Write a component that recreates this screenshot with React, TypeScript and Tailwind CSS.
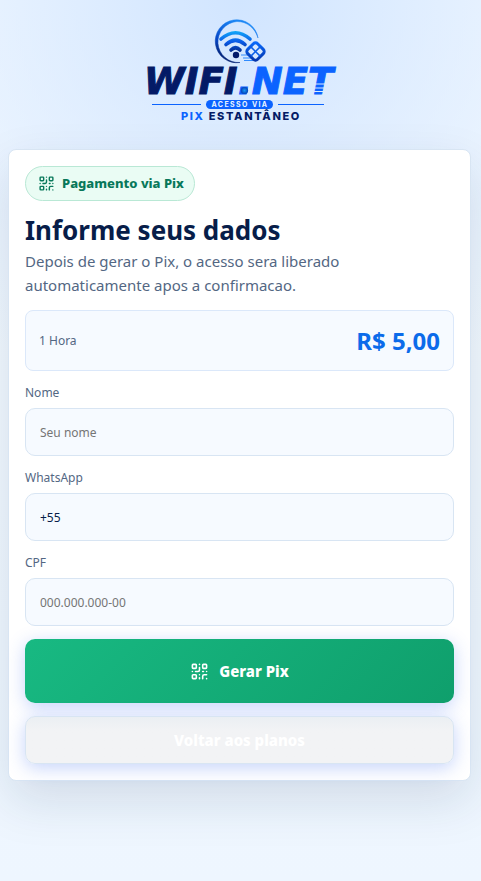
import { useState } from 'react';
import { QrCode } from 'lucide-react';

interface Field {
    id: string;
    label: string;
    placeholder: string;
    initial: string;
    inputMode: 'text' | 'tel' | 'numeric';
}

const fields: Field[] = [
    { id: 'nome', label: 'Nome', placeholder: 'Seu nome', initial: '', inputMode: 'text' },
    { id: 'whatsapp', label: 'WhatsApp', placeholder: '+55', initial: '+55', inputMode: 'tel' },
    { id: 'cpf', label: 'CPF', placeholder: '000.000.000-00', initial: '', inputMode: 'numeric' }
];

const Logo = () => (
    <svg viewBox="0 0 200 120" className="h-[120px] w-[200px]" role="img" aria-label="WIFI.NET">
        <defs>
            <linearGradient id="ring" x1="0" y1="1" x2="0.4" y2="0">
                <stop offset="0" stopColor="#02104f" />
                <stop offset="0.5" stopColor="#0648c8" />
                <stop offset="1" stopColor="#1a86f5" />
            </linearGradient>
            <linearGradient id="wave" gradientUnits="userSpaceOnUse" x1="0" y1="20" x2="0" y2="46">
                <stop offset="0" stopColor="#12b0fa" />
                <stop offset="0.45" stopColor="#0a5be8" />
                <stop offset="1" stopColor="#021a6b" />
            </linearGradient>
            <linearGradient id="chip" x1="0" y1="0" x2="1" y2="1">
                <stop offset="0" stopColor="#0a6cff" />
                <stop offset="1" stopColor="#0433a8" />
            </linearGradient>
            <radialGradient id="dot">
                <stop offset="0" stopColor="#1697f7" />
                <stop offset="1" stopColor="#0440b5" />
            </radialGradient>
        </defs>
        {/* ring that thins out towards the right */}
        <path d="M100 52.500 A21.500 21.500 0 1 1 118 28 C115 18 107 11.500 97 11.500 A20 20 0 0 0 100 52.500Z" fill="url(#ring)" stroke="url(#ring)" strokeWidth="0.500" />
        <g fill="none" stroke="url(#wave)" strokeLinecap="round" strokeWidth="3.600">
            <path d="M81 29 Q95.500 16.500 110 29" />
            <path d="M86 34.500 Q95.500 26 105 34.500" />
            <path d="M91 40 Q95.500 35.500 100 40" />
        </g>
        <circle cx="96" cy="45" r="3.200" fill="#021a6b" />
        <path d="M101 45h9M103 48h8M104 50.500h9" stroke="#2f8bff" strokeWidth="1" />
        <g transform="rotate(45 115.500 41.500)">
            <rect x="108.500" y="34.500" width="14" height="14" rx="3" fill="#d9eaff" stroke="url(#chip)" strokeWidth="3" />
            <path d="M115.500 35v13M109 41.500h13" stroke="#0b5fe8" strokeWidth="1.500" />
        </g>
        <text x="4" y="84" fontSize="37" strokeWidth="1" className="font-['DejaVu_Sans',sans-serif] font-bold italic" fill="#031a66" stroke="#031a66">
            WIFI<tspan fill="#0b63ff" stroke="#0b63ff">.NET</tspan>
        </text>
        <circle cx="104.500" cy="80.500" r="3.600" fill="url(#dot)" />
        <path d="M173 74h14M172 78h14M171 81.500h14" stroke="#dcebff" strokeWidth="1" />
        <path d="M12 94.500h49M138 94.500h46" stroke="#0b63ff" strokeWidth="1" />
        <rect x="66" y="90" width="67" height="9" rx="4.500" fill="#0b63ff" />
        <text x="100" y="97" fontSize="7" textAnchor="middle" className="font-[Inter,sans-serif] font-bold tracking-[0.2em]" fill="#eaf4ff">ACESSO VIA</text>
        <text x="101" y="110" fontSize="11" textAnchor="middle" className="font-[Inter,sans-serif] font-extrabold tracking-[0.15em]" fill="#031a66">
            <tspan fill="#0b63ff">PIX</tspan> ESTANTÂNEO
        </text>
    </svg>
);

const App = () => {
    const [values, setValues] = useState<Record<string, string>>(
        Object.fromEntries(fields.map((field) => [field.id, field.initial]))
    );

    return (
        <div className="min-h-screen bg-[radial-gradient(circle_at_top,#d1e5ff_0%,transparent_46%),linear-gradient(180deg,#f5faff,#eef6ff)] pt-[10px] pr-[10px] pb-8 pl-2 font-['Noto_Sans',sans-serif] text-[#071d49]">
            <header className="flex justify-center pb-[19px]">
                <Logo />
            </header>

            <main className="rounded-lg border border-[#d8e5f3] bg-white p-4 shadow-[0_20px_50px_rgba(15,45,75,0.13)]">
                <form className="flex flex-col gap-[13px]" onSubmit={(event) => event.preventDefault()}>
                    <div>
                        <span className="inline-flex h-[35px] items-center gap-[7px] rounded-full border border-[#b9e8d5] bg-[#eafcf4] pr-[10px] pl-3 text-[13px] font-extrabold text-[#08785a]">
                            <QrCode className="size-[17px]" />
                            Pagamento via Pix
                        </span>
                        <h1 className="mt-[10px] text-[26px] leading-[38px] font-bold">Informe seus dados</h1>
                        <p className="text-[15px] leading-6 text-[#536783]">
                            Depois de gerar o Pix, o acesso sera liberado automaticamente apos a confirmacao.
                        </p>
                    </div>

                    <div className="flex h-[61px] items-center justify-between rounded-lg border border-[#dbe8fa] bg-[#f6faff] px-[13px]">
                        <span className="text-xs text-[#536783]">1 Hora</span>
                        <strong className="text-2xl font-bold text-[#0b6bea]">R$ 5,00</strong>
                    </div>

                    {fields.map((field) => (
                        <div key={field.id} className="flex flex-col gap-[7px]">
                            <label htmlFor={field.id} className="text-xs leading-[17px] text-[#536783]">{field.label}</label>
                            <input
                                id={field.id}
                                type="text"
                                inputMode={field.inputMode}
                                placeholder={field.placeholder}
                                value={values[field.id]}
                                onChange={(event) => setValues({ ...values, [field.id]: event.target.value })}
                                className="h-12 w-full rounded-[10px] border border-[#d8e5f3] bg-[#f6faff] px-[14px] text-xs text-[#071d49] placeholder:text-[#757575]"
                            />
                        </div>
                    ))}

                    <button type="submit" className="flex h-16 items-center justify-center gap-[10px] rounded-[10px] bg-linear-135 from-[#18b982] to-[#0f9f6c] text-[15px] font-extrabold text-white shadow-[0_4px_18px_rgba(50,100,240,0.28)]">
                        <QrCode className="size-[19px]" />
                        Gerar Pix
                    </button>
                    <button type="button" className="h-12 rounded-[10px] border border-[#d8e5f3] bg-linear-to-b from-[#ebeff3] to-[#f2f3f5] to-30% text-[15px] font-extrabold text-white shadow-[0_4px_18px_rgba(50,100,240,0.28)]">
                        Voltar aos planos
                    </button>
                </form>
            </main>
        </div>
    );
};

export default App;
